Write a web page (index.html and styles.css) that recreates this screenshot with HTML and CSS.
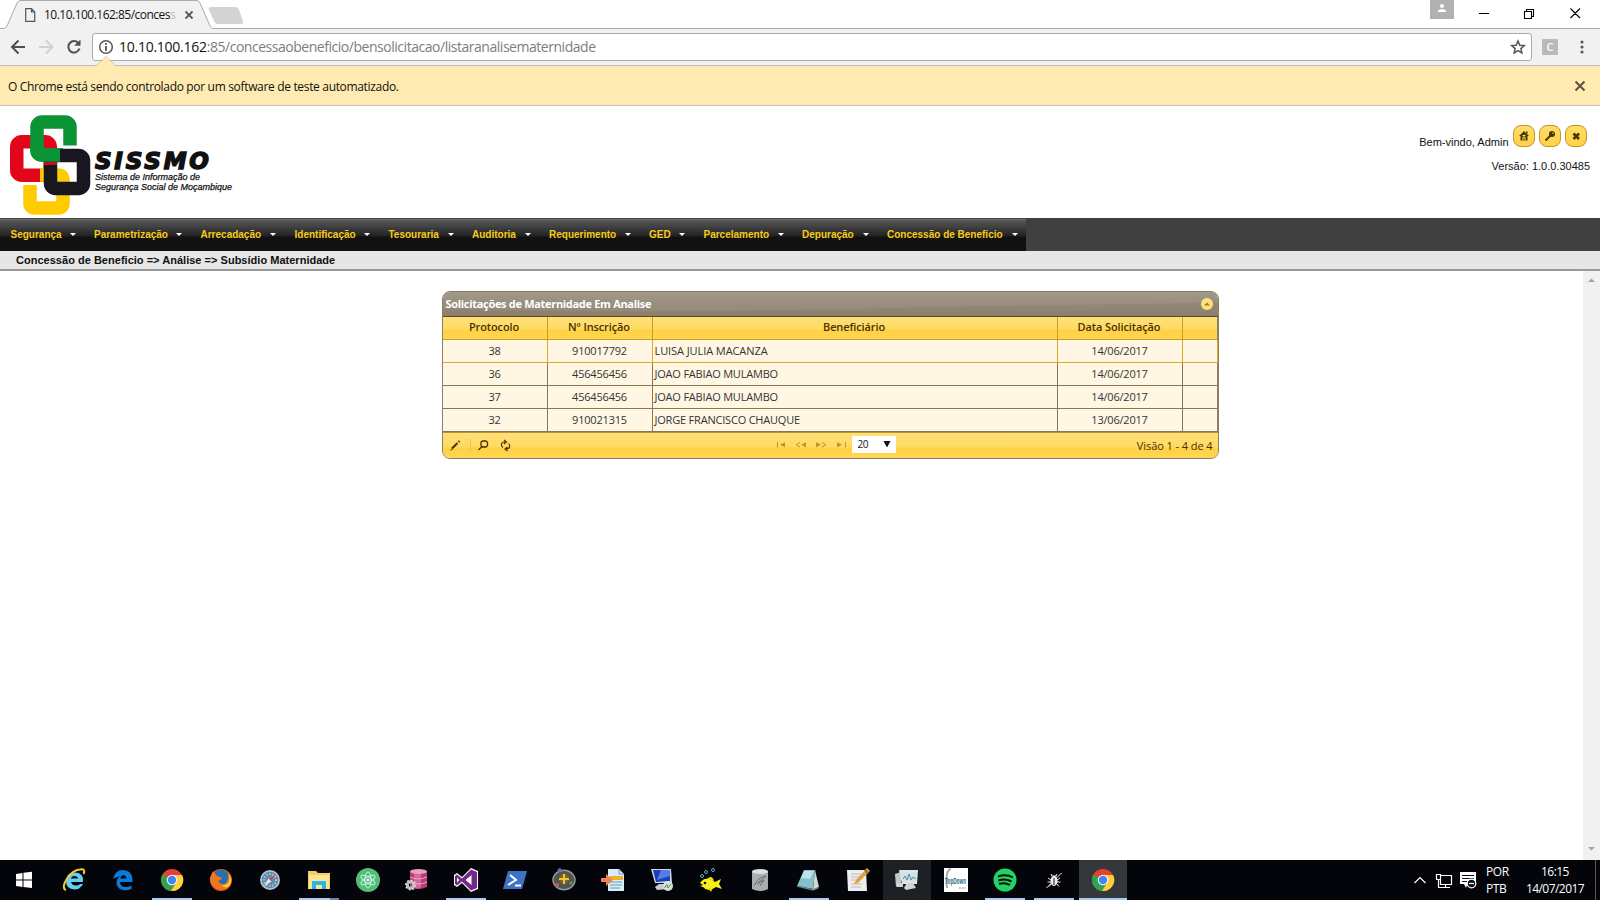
FILE: index.html
```html
<!DOCTYPE html>
<html lang="pt-BR">
<head>
<meta charset="utf-8">
<title>SISSMO</title>
<link rel="stylesheet" href="styles.css">
</head>
<body>
<div class="tabstrip">
  <svg class="tabs" width="260" height="29" viewBox="0 0 260 29">
    <path d="M0 28.5H4Q6 28 7 26L17 3Q18 .5 21 .5H196Q199 .5 200 3L210 26Q211 28 213 28.5H260V30H0z" fill="#f1f1f1"/>
    <path d="M0 28.500H4Q6 28 7 26L17 3Q18 .5 21 .5H196Q199 .5 200 3L210 26Q211 28.500 213 28.500H260" fill="none" stroke="#aaa"/>
    <path d="M211 7H235Q238 7 239 10L243 21Q244 24 241 24H218Q215 24 214 21L209 10Q208 7 211 7z" fill="#d3d3d3"/>
    <path d="M25.700 8.700H31.500L34.700 12V21.300H25.700zM31.500 8.700V12H34.700" fill="none" stroke="#555" stroke-width="1.200"/>
    <path d="M185.500 11.500L192.500 18.500M192.500 11.500L185.500 18.500" stroke="#5a5a5a" stroke-width="1.800"/>
  </svg>
  <span class="tab-title">10.10.100.162:85/conces<i>s</i></span>
  <svg class="window-buttons" width="170" height="29" viewBox="0 0 170 29">
    <path d="M0 0H24V19H0z" fill="#b1b1b1"/><circle cx="12" cy="6" r="2" fill="#fff"/><path d="M8 12V10.500Q12 7.500 16 10.500V12z" fill="#fff"/>
    <path d="M49 13.500H59M94.500 11.500H101.500V18.500H94.500zM96.500 11V9.500H103.500V16.500H102M140.500 8.500L150 18M150 8.500L140.500 18" fill="none" stroke="#000" stroke-width="1.100"/>
  </svg>
</div>
<div class="toolbar">
  <svg width="92" height="36" viewBox="0 0 92 36" fill="none" stroke-width="2">
    <path d="M25 18H12.500M18.500 11.500L12 18L18.500 24.500" stroke="#505050"/>
    <path d="M39 18H51.500M46 11.500L52.500 18L46 24.500" stroke="#d0d0d0"/>
    <path d="M78.700 14.500A5.700 5.700 0 1 0 79.500 19.500" stroke="#505050"/><path d="M80.500 10.500V16.800H74.200z" fill="#505050"/>
  </svg>
  <div class="address">
    <svg width="24" height="26" viewBox="0 0 24 26"><circle cx="13" cy="13" r="6.300" fill="none" stroke="#555" stroke-width="1.500"/><path d="M13 12V17M13 9V10.800" stroke="#555" stroke-width="1.800"/></svg>
    <span class="url"><b>10.10.100.162</b>:85/concessaobeneficio/bensolicitacao/listaranalisematernidade</span>
    <svg class="star" width="20" height="26" viewBox="0 0 20 26"><path d="M10 7L11.800 11.200L16.300 11.600L12.900 14.600L13.900 19L10 16.700L6.100 19L7.100 14.600L3.700 11.600L8.200 11.200z" fill="none" stroke="#555" stroke-width="1.500"/></svg>
  </div>
  <span class="extension">C</span>
  <svg width="10" height="36" viewBox="0 0 10 36" fill="#5a5a5a"><circle cx="5" cy="13" r="1.600"/><circle cx="5" cy="18" r="1.600"/><circle cx="5" cy="23" r="1.600"/></svg>
  <svg class="notch" width="20" height="11" viewBox="0 0 20 11"><path d="M0 10.500L10 .5L20 10.500V11H0z" fill="#ffeab1"/><path d="M0 10L10 .5L20 10" fill="none" stroke="#c9bf9f" stroke-width=".8"/></svg>
</div>
<div class="infobar">
  <span class="info-text">O Chrome está sendo controlado por um software de teste automatizado.</span>
  <svg width="12" height="12" viewBox="0 0 12 12"><path d="M1.500 1.500L10.500 10.500M10.500 1.500L1.500 10.500" stroke="#5c5542" stroke-width="2"/></svg>
</div>
<header class="header">
  <svg class="logo" width="80" height="100" viewBox="0 0 80 100" fill="none" stroke-width="13.500">
    <rect x="6.750" y="26.750" width="33.500" height="33.500" rx="5" stroke="#e3061b"/>
    <path d="M20 70V88Q20 93 25 93H48Q53 93 53 88V65Q53 60 48 60H30" stroke="#fecb00"/>
    <rect x="27" y="7" width="33" height="33" rx="5" stroke="#0a9435"/>
    <path d="M53 30.500H68V34H53z" fill="#fff" stroke="none"/>
    <rect x="40.500" y="40.500" width="33" height="33" rx="5" stroke="#18171f"/>
    <path d="M27 29V35Q27 40 32 40H50" stroke="#0a9435"/>
    <path d="M34 47H47V50H34z" fill="#c50d22" stroke="none"/>
    <path d="M13 67H30V70H13z" fill="#fff" stroke="none"/>
  </svg>
  <div class="brand"><strong>SISSMO</strong><em class="brand-a">Sistema de Informação de</em><em class="brand-b">Segurança Social de Moçambique</em></div>
  <div class="user">
    <div class="welcome"><span class="hello">Bem-vindo, Admin</span>
      <span class="pill"><svg viewBox="0 0 20 20"><path d="M10 5L5 10H6.500V14.500H13.500V10H15zM12 5.500H13.500V8H12z" fill="#4b3500"/><path d="M9 14.500V11H11V14.500M8.500 9.500H11.500" stroke="#ffdc58" fill="none"/></svg></span>
      <span class="pill"><svg viewBox="0 0 20 20"><circle cx="12" cy="8" r="3" fill="#4b3500"/><path d="M10.500 9.500L5.500 14.500" stroke="#4b3500" stroke-width="2"/><circle cx="13" cy="7" r=".8" fill="#ffdc58"/></svg></span>
      <span class="pill"><svg viewBox="0 0 20 20"><path d="M7.500 7.500L13 13M13 7.500L7.500 13" stroke="#4b3500" stroke-width="2.600"/></svg></span>
    </div>
    <div class="version">Versão: 1.0.0.30485</div>
  </div>
</header>
<nav class="menu">
  <ul class="menu-items">
    <li>Segurança</li><li>Parametrização</li><li>Arrecadação</li><li>Identificação</li><li>Tesouraria</li><li>Auditoria</li><li>Requerimento</li><li>GED</li><li>Parcelamento</li><li>Depuração</li><li>Concessão de Beneficio</li>
  </ul>
</nav>
<div class="crumb"><span class="crumb-text">Concessão de Beneficio =&gt; Análise =&gt; Subsídio Maternidade</span></div>
<main class="content">
  <section class="grid">
    <div class="grid-title"><svg class="wave" width="776" height="24" viewBox="0 0 776 24" preserveAspectRatio="none"><path d="M0 0H776V10C650 14 580 12 450 16S100 20 0 17z" fill="#fff" opacity=".06"/></svg><span>Solicitações de Maternidade Em Analise</span><svg width="12" height="12" viewBox="0 0 12 12"><circle cx="6" cy="6" r="6" fill="#ffe079"/><path d="M3 7.500L6 4.500L9 7.500z" fill="#a37b1c"/></svg></div>
    <div class="row head"><span>Protocolo</span><span>Nº Inscrição</span><span>Beneficiário</span><span>Data Solicitação</span><span></span></div>
    <div class="row hover"><span>38</span><span>910017792</span><span class="name n1">LUISA JULIA MACANZA</span><span>14/06/2017</span><span></span></div>
    <div class="row"><span>36</span><span>456456456</span><span class="name">JOAO FABIAO MULAMBO</span><span>14/06/2017</span><span></span></div>
    <div class="row"><span>37</span><span>456456456</span><span class="name">JOAO FABIAO MULAMBO</span><span>14/06/2017</span><span></span></div>
    <div class="row"><span>32</span><span>910021315</span><span class="name">JORGE FRANCISCO CHAUQUE</span><span>13/06/2017</span><span></span></div>
    <div class="pager">
      <svg class="tools" width="80" height="26" viewBox="0 0 80 26" fill="none" stroke="#4c3000">
        <path d="M9 15.500L14.500 10M15.500 9L16.500 8" stroke-width="2"/><path d="M7.500 17L9.500 16.500"/><path d="M27.500 6V20" stroke="#f3c444"/>
        <path d="M38 9L39.500 8H43L44.500 9.500V12.500L43 14H39.500L38 12.500zM39 13.500L35.500 17" stroke-width="1.300"/>
        <path d="M60 14.500C57 11.500 58.500 8.500 62.500 9M61 7L63.500 9L61 11M65.500 10.500C68 13.500 66.500 16 62.500 16M64.500 14L62 16L64.500 18" stroke-width="1.100"/>
      </svg>
      <svg class="arrows" width="74" height="26" viewBox="0 0 74 26" fill="#bd922f"><path d="M1 9H2V14.500H1zM4 11.700L9 9.200V14.300zM25 11.700L30 9.200V14.300zM40 9.200L45 11.700L40 14.300zM61 9.200L66 11.700L61 14.300zM69 9H70V14.500H69z"/><path d="M24 9.500L20 11.700L24 14M46 9.500L50 11.700L46 14" fill="none" stroke="#bd922f"/></svg>
      <span class="select">20<svg width="8" height="8" viewBox="0 0 8 8"><path d="M.5 1H7.500L4 7.500z" fill="#111"/></svg></span>
      <span class="view">Visão 1 - 4 de 4</span>
    </div>
  </section>
  <div class="scroll"><svg width="17" height="17" viewBox="0 0 17 17"><path d="M5 11L8.500 7.500L12 11z" fill="#a3a3a3"/></svg><svg width="17" height="17" viewBox="0 0 17 17"><path d="M5 4L8.500 7.500L12 4z" fill="#a3a3a3"/></svg></div>
</main>
<footer class="taskbar">
  <svg width="0" height="0" class="defs"><defs><symbol id="chrome" viewBox="0 0 24 24"><circle cx="12" cy="12" r="11" fill="#e34133"/><path d="M12 12L2.500 6.500A11 11 0 0 0 11 23L17 14z" fill="#31a350"/><path d="M12 12L16.300 14.500L11 23A11 11 0 0 0 22 7H12z" fill="#ffcf3d"/><circle cx="12" cy="12" r="5.300" fill="#f4f4ff"/><circle cx="12" cy="12" r="4.200" fill="#4587ef"/></symbol></defs></svg>
  <span class="task start"><svg viewBox="0 0 24 24"><path d="M4 6L10.500 5V11.500H4zM11.500 4.800L20 3.800V11.500H11.500zM4 12.500H10.500V19L4 18zM11.500 12.500H20V20L11.500 19z" fill="#fff"/></svg></span>
  <span class="task"><svg viewBox="0 0 24 24"><path d="M21 14H9Q10 17.500 14 17.500Q17 17.500 18 16H21Q18 21.500 12.500 21.500Q4 21 4 13Q4 4.500 12.500 4.500Q22 4.500 21 14zM9 10.500H16Q15.500 8 12.500 8Q9.500 8 9 10.500z" fill="#65cff2"/><path d="M4 22C-3 20 8 2 18 1.500Q24 .5 21.500 6" fill="none" stroke="#f6c72e" stroke-width="2"/></svg></span>
  <span class="task"><svg viewBox="0 0 24 24"><path d="M2 11Q4 2 12 2Q21 2 21.500 12V14H9Q9 19 15 19Q18 19 20.500 17.500V21Q16 23 12 22Q5 20.500 5.500 14Q6 10 9 8.500Q5 8.500 2 11zM9.300 10.500H15.500Q15 7 12 7Q9.500 8 9.300 10.500z" fill="#087bdc"/></svg></span>
  <span class="task open"><svg><use href="#chrome"/></svg></span>
  <span class="task"><svg viewBox="0 0 24 24"><circle cx="12" cy="12" r="11" fill="#e65b18"/><path d="M5 5Q12-2 19 5Q22 12 17 16Q11 18 8 13Q12 13 13 10L8 9z" fill="#2770b0"/><path d="M1 10L4 3L8 8L13 10Q11 12 9 12Q10 17 16 16Q20 13 19 5Q24 11 21 18Q13 24 6 20Q1 16 1 10z" fill="#ef781d"/><path d="M19 5Q22 10 19 15Q16 18 12 17Q20 23 22 14Q23 9 19 5z" fill="#ffc739"/></svg></span>
  <span class="task"><svg viewBox="0 0 24 24"><circle cx="12" cy="12" r="10" fill="#b9c2c8"/><circle cx="12" cy="12" r="8.300" fill="#5f8bae"/><circle cx="12" cy="12" r="6" fill="none" stroke="#c1d9e5" stroke-width="2" stroke-dasharray="1 2"/><path d="M18 6L13.500 13.500L6 18L10.500 10.500z" fill="#e9e9e9"/><path d="M18 6L13.500 13.500L10.500 10.500z" fill="#a45763"/></svg></span>
  <span class="task open stacked"><svg viewBox="0 0 24 24"><path d="M1 3H9L11 5H23V21H1z" fill="#f3cd65"/><path d="M2 7H22V21H2z" fill="#ffe391"/><path d="M5 13H19V21H15V17H9V21H5z" fill="#29b5e9"/></svg></span>
  <span class="task"><svg viewBox="0 0 24 24"><circle cx="12" cy="12" r="12" fill="#55ba7d"/><g fill="none" stroke="#e2fff0" stroke-width=".8"><ellipse cx="12" cy="12" rx="3" ry="8"/><ellipse cx="12" cy="12" rx="3" ry="8" transform="rotate(60 12 12)"/><ellipse cx="12" cy="12" rx="3" ry="8" transform="rotate(120 12 12)"/></g><circle cx="12" cy="12" r="1.300" fill="#fff"/></svg></span>
  <span class="task"><svg viewBox="0 0 24 24"><path d="M5 3V19Q13 23 22 19V3z" fill="#b43d74"/><path d="M9 4V20Q13 21 16 20V4z" fill="#d669a0"/><ellipse cx="13.500" cy="3.500" rx="8.500" ry="2.500" fill="#eaa1c1"/><path d="M5 9Q13 13 22 9M5 14Q13 18 22 14" fill="none" stroke="#efa4c5"/><circle cx="5.500" cy="17" r="3.200" fill="none" stroke="#bebebe" stroke-width="3"/><circle cx="5.500" cy="17" r="4.700" fill="none" stroke="#ddd" stroke-width="1.600" stroke-dasharray="1.800 1.800"/></svg></span>
  <span class="task open"><svg viewBox="0 0 24 24"><path d="M17 0L24 3V21L17 24L8 15L3 19L0 17V7L3 5L8 9z" fill="#fff"/><path d="M17 1.500L23 4V20L17 22.500L8 13.500L3 17.500L1 16V8L3 6.500L8 10.500z" fill="#712a85"/><path d="M17.500 7L11.500 12L17.500 17zM3 9.500V14.500L5.500 12z" fill="#fff"/></svg></span>
  <span class="task"><svg viewBox="0 0 24 24"><path d="M5 3H24L19 21H0z" fill="#3e72c4"/><path d="M7 7L13 12L5 17M12 17.500H18" fill="none" stroke="#fff" stroke-width="2"/></svg></span>
  <span class="task"><svg viewBox="0 0 24 24"><ellipse cx="12" cy="12" rx="11" ry="9.800" fill="#4e5553" stroke="#91958e" stroke-width="1.500"/><circle cx="12" cy="11" r="5" fill="#74652f"/><path d="M12 6V16M7 11H17" stroke="#f5c32d" stroke-width="2"/><circle cx="5" cy="17" r="2" fill="#c95964"/><circle cx="19" cy="15" r="1.800" fill="#4d9858"/><path d="M6 3L9 1" stroke="#5873b7" stroke-width="3"/></svg></span>
  <span class="task"><svg viewBox="0 0 24 24"><path d="M7 1H18L23 6V23H7z" fill="#d7edf7"/><path d="M18 1V6H23M9 14H21M9 17H21M9 20H19" fill="none" stroke="#6b9bb4"/><path d="M9 8H22V12H9z" fill="#f2ad2b"/><path d="M0 10H5V6L12 12L5 18V14H0z" fill="#ed8052"/></svg></span>
  <span class="task"><svg viewBox="0 0 24 24"><path d="M1 1H21L22 15H5z" fill="#d2d8dd"/><path d="M3 2H20V13L6 14z" fill="#173fc1"/><path d="M11 2H20V8L7 12z" fill="#557de4"/><path d="M9 16H15L18 21L7 22L5 19z" fill="#c9ced2"/><circle cx="18" cy="18" r="5" fill="#dce5d4"/><path d="M14.500 20L17 16.500L18 20L21 16" fill="none" stroke="#5b8b54"/></svg></span>
  <span class="task"><svg viewBox="0 0 24 24"><path d="M1 15Q6 7 16 14L22 11L20 16L23 21L17 19Q9 25 4 19L1 18L4 17z" fill="#f9f017"/><path d="M8 11Q13 6 15 13zM9 20L12 24L14 19z" fill="#f0de0d"/><circle cx="6" cy="15" r="1.300" fill="#111"/><g fill="none" stroke="#62adc0"><circle cx="3" cy="8" r="1.500"/><circle cx="7" cy="4" r="1.500"/><circle cx="14" cy="2" r="1.500"/></g></svg></span>
  <span class="task"><svg viewBox="0 0 24 24"><path d="M4 3V21Q12 25 20 21V3z" fill="#a9adb0"/><ellipse cx="12" cy="3.500" rx="8" ry="2.500" fill="#dedfe0"/><path d="M6 18Q10 9 18 8L9 16L16 12L12 18" fill="none" stroke="#6a6f73"/></svg></span>
  <span class="task open"><svg viewBox="0 0 24 24"><path d="M7 2H18L16 21L0 18z" fill="#82c1cf"/><path d="M18 2L22 19L16 22z" fill="#d9d9cb"/><path d="M7 3H17L13 11L4 10z" fill="#bfe1e7"/><path d="M0 18L16 22L21 20" fill="none" stroke="#647d83" stroke-width="1.500"/></svg></span>
  <span class="task"><svg viewBox="0 0 24 24"><path d="M1 2H20L21 23H2z" fill="#eee"/><path d="M5 6H15M5 9H15M5 12H13M5 16H16M5 19H15" stroke="#bbb"/><path d="M21 0L24 3L12 15L8 16L10 12z" fill="#e4a23a"/><path d="M19 2L22 5" stroke="#8f6b40" stroke-width="2"/></svg></span>
  <span class="task warm"><svg viewBox="0 0 24 24"><path d="M0 6L6 4V16L1 19z" fill="#c2c8c8"/><path d="M4 2H23L22 16H7z" fill="#dfe5e5"/><path d="M6 4H21V14H8z" fill="#d3e2e6"/><path d="M8 11L10 8L12 12L14 6L16 12L18 9L21 11" fill="none" stroke="#367894" stroke-width=".8"/><path d="M12 15H18L21 20L11 22L9 20zM2 15H8V19H2z" fill="#d0d4d6"/></svg></span>
  <span class="task"><svg viewBox="0 0 24 24"><path d="M0 0H24V24H0z" fill="#fff"/><path d="M7 1Q1 2 3 20" fill="none" stroke="#a3a9a7" stroke-width="2"/><text x="1" y="16" class="topdown" textLength="21" lengthAdjust="spacingAndGlyphs">TopDown</text><path d="M15 20H22" stroke="#6e8f98" stroke-dasharray="2 1"/></svg></span>
  <span class="task open"><svg viewBox="0 0 24 24"><circle cx="12" cy="12" r="11.500" fill="#1fd463"/><path d="M5 8.500Q13 5.500 20 9.500M5.500 12.500Q12 10 18.500 13.500M6 16Q12 14 17 17" fill="none" stroke="#07140a" stroke-width="2"/></svg></span>
  <span class="task open"><svg viewBox="0 0 24 24"><ellipse cx="12" cy="13" rx="3.500" ry="5" fill="#eee"/><path d="M9.500 8H14.500M6 10L9 12M18 10L15 12M5.500 14H9M18.500 14H15M7 18.500L9 16M17 18.500L15 16M10 8L9 6M14 8L15 6M4.500 20L19.500 5" stroke="#eee"/><path d="M12 10V17" stroke="#111"/></svg></span>
  <span class="task active"><svg><use href="#chrome"/></svg></span>
  <div class="tray">
    <svg width="66" height="24" viewBox="0 0 66 24" fill="none" stroke="#fff" stroke-width="1.200"><path d="M1.500 15L7 9.500L12.500 15M27 7.500H38.500V16.500H27.500V12M32.500 17V19.500M29 19.500H37M23.500 6.500H27.500V11.500H23.500zM25.500 11.500V19.500H29"/><path d="M47 4H63V16H60A5 5 0 0 0 53 20L51 16H47z" fill="#fff" stroke="none"/><path d="M49 7.500H61M49 10.500H61M49 13.500H55" stroke="#111"/><circle cx="58.500" cy="15.500" r="4.300" fill="#111"/><path d="M56 15.500H61"/></svg>
    <div class="lang"><span>POR</span><span>PTB</span></div>
    <div class="clock"><span>16:15</span><span class="date">14/07/2017</span></div>
    <i class="show-desktop"></i>
  </div>
</footer>
</body>
</html>
```

FILE: styles.css
```css
* { box-sizing: border-box; }
body { margin: 0; width: 1600px; height: 900px; overflow: hidden; display: flex; flex-direction: column; background: #fff; font-family: "Open Sans", sans-serif; font-size: 12px; color: #111; white-space: nowrap; }
svg { display: block; flex: none; }
.tabstrip { position: relative; display: flex; justify-content: space-between; height: 29px; flex: none; border-bottom: 1px solid #aaa; }
.tab-title { position: absolute; left: 44px; top: 6px; line-height: 18px; letter-spacing: -.52px; }
.tab-title i { font-style: normal; color: #bbb; }
.toolbar { position: relative; display: flex; align-items: center; height: 37px; flex: none; background: #f1f1f1; border-bottom: 1px solid #bbb; }
.address { display: flex; width: 1440px; height: 28px; border: 1px solid #aaa; border-radius: 3px; background: #fff; align-items: center; }
.url { margin-left: 2px; font-size: 14px; line-height: 26px; color: #7d7d7d; letter-spacing: -.47px; }
.url b { font-weight: 400; color: #111; letter-spacing: -.26px; }
.star { margin-left: auto; margin-right: 3px; }
.extension { width: 16px; height: 16px; margin: 0 19px 0 10px; background: #b9b9b9; color: #fff; border-radius: 1px; font-size: 11px; line-height: 16px; text-align: center; font-weight: 600; }
.notch { position: absolute; left: 96px; top: 27px; }
.infobar { display: flex; align-items: center; justify-content: space-between; height: 40px; flex: none; padding: 0 14px 0 8px; background: #ffeab1; border-bottom: 1px solid #cbc4b3; }
.info-text { padding-top: 2px; letter-spacing: -.33px; }
.header { display: flex; height: 112px; flex: none; padding: 8px 10px 0; font-family: "Liberation Sans", sans-serif; }
.logo { overflow: visible; margin-top: 1px; }
.brand { display: flex; flex-direction: column; margin: 35px 0 0 5px; color: #111; }
.brand strong { font: italic 900 23px/23px "DejaVu Sans", sans-serif; letter-spacing: 2.8px; padding-top: 1px; margin-bottom: -1px; -webkit-text-stroke: 1.5px #111; }
.brand em { font-size: 9px; line-height: 10px; -webkit-text-stroke: .25px #111; }
.user { margin-left: auto; font-size: 11px; }
.welcome { display: flex; gap: 4px; justify-content: flex-end; padding: 11px 3.5px 0 0; }
.hello { line-height: 16px; padding-top: 9px; }
.pill { width: 22px; height: 22px; border: 1px solid #c79328; border-radius: 8px; background: linear-gradient(#ffdd64, #ffd14b); }
.pill svg { width: 20px; height: 20px; }
.version { margin-top: 9px; line-height: 15px; text-align: right; }
.menu { height: 33px; flex: none; background: #404040; }
.menu-items { margin: 0; padding: 0; list-style: none; display: grid; grid-template-columns: 83.5px 106.5px 94px 94px 83.5px 77px 100px 54.5px 98.5px 85px 149.5px; width: 1026px; height: 33px; border-top: 1px solid #444; background: linear-gradient(#777 0, #555 5%, #222 53%, #111 56%, #111 100%); color: #f8cc18; font: bold 10px/31px "Liberation Sans", sans-serif; }
.menu-items li { display: flex; align-items: center; justify-content: space-between; height: 31px; padding: 0 8px 0 10.5px; }
.menu-items li::after { content: ""; border: 3px solid transparent; border-top-color: #fff; border-bottom: 0; }
.crumb { height: 20px; flex: none; padding-left: 16px; background: #e6e6e6; border-bottom: 2px solid #999; font: bold 11px/18px "Liberation Sans", sans-serif; letter-spacing: .02px; }
.content { flex: 1; display: flex; justify-content: space-between; min-height: 0; }
.grid { width: 777px; height: 168px; margin: 20px 0 0 442px; border: 1px solid #8c7f61; border-radius: 8px; overflow: hidden; background: #fff7e3; color: #4c3000; font-size: 11px; }
.grid-title { position: relative; height: 25px; display: flex; align-items: center; justify-content: space-between; padding: 0 5px 0 2.5px; color: #fff; font-weight: 700; background: linear-gradient(#9c9280, #8a7f6c); border-bottom: 1px solid #5d4b22; letter-spacing: -.31px; }
.grid-title span { line-height: 24px; }
.wave { position: absolute; left: 0; top: 0; }
.row { display: grid; grid-template-columns: 105px 105px 405px 125px 1fr; width: 775px; height: 23px; border-right: 1px solid #8c7f61; color: #333; }
.row span { border-right: 1px solid #8b7650; border-bottom: 1px solid #8b7650; padding-right: 1px; text-align: center; line-height: 21px; letter-spacing: -.2px; }
.row span:last-child { border-right: 0; }
.row .name { text-align: left; padding-left: 1.5px; letter-spacing: -.2px; }
.row .n1 { letter-spacing: -.08px; }
.row.head { color: #4c3000; font-weight: 600; background: linear-gradient(#ffdf78, #fedb65 50%, #ffd143 60%, #ffd657); }
.row.head span { padding-right: 2px; border-color: #cd9b21; line-height: 20px; letter-spacing: -.12px; }
.row.hover, .row.hover span { border-color: #daaa2d; }
.pager { display: flex; height: 27px; border-top: 1px solid #bd9230; background: linear-gradient(#ffdf78, #fedb65 50%, #ffd143 60%, #ffd657); }
.arrows { margin-left: 252.5px; }
.select { display: flex; align-items: center; justify-content: space-between; width: 44px; height: 17px; margin: 2.5px 0 0 2px; padding: 0 5px 0 6px; background: #fff; color: #111; font-size: 10px; letter-spacing: -.4px; }
.view { margin-left: auto; padding-right: 5.5px; line-height: 26px; letter-spacing: -.08px; }
.scroll { display: flex; flex-direction: column; justify-content: space-between; width: 17px; background: #f1f1f1; }
.taskbar { display: flex; height: 40px; flex: none; background: #03050a; color: #fff; }
.defs { position: absolute; }
.task { display: flex; align-items: center; justify-content: center; width: 48px; height: 40px; margin-right: 1px; flex: none; position: relative; }
.task svg { width: 24px; height: 24px; overflow: visible; }
.start { margin-right: 2px; }
.open::after { content: ""; position: absolute; left: 4px; right: 4px; bottom: 0; height: 2px; background: #a9ccef; }
.stacked::after { background: linear-gradient(90deg, #a9ccef 78%, #72869c 78%); }
.warm { background: #1d2024; }
.active { background: #35383b; box-shadow: inset 0 -2px #a9ccef; }
.topdown { font: bold 9px "Liberation Sans", sans-serif; fill: #25677c; }
.tray { display: flex; align-items: center; margin-left: auto; }
.lang, .clock { display: flex; flex-direction: column; line-height: 17px; }
.lang { margin-left: 7px; width: 26px; letter-spacing: -.4px; }
.clock { width: 64px; margin-left: 11px; padding-bottom: 1px; text-align: center; letter-spacing: -.55px; }
.show-desktop { height: 40px; border-left: 1px solid #555; margin-left: 8px; width: 5px; }
```
